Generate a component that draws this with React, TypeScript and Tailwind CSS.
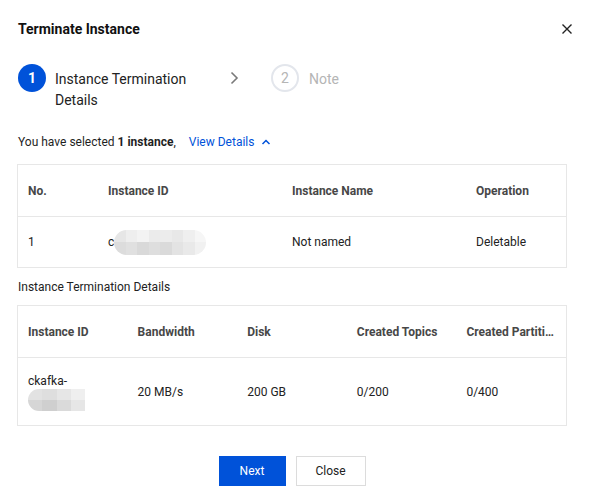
import React from 'react';

const font = { fontFamily: 'Roboto, "Liberation Sans", Arial, sans-serif' };

function BlurPill({ top, bottom, className }: { top: string[]; bottom: string[]; className: string }) {
  return (
    <div className={className}>
      <div className="flex h-1/2">
        {top.map((c, i) => (
          <div key={i} className="flex-1" style={{ background: c }} />
        ))}
      </div>
      <div className="flex h-1/2">
        {bottom.map((c, i) => (
          <div key={i} className="flex-1" style={{ background: c }} />
        ))}
      </div>
    </div>
  );
}

function ChevronRight() {
  return (
    <svg width="10" height="14" viewBox="0 0 10 14" fill="none">
      <path d="M2.5 1.5L8 7l-5.5 5.5" stroke="#7a7a7a" strokeWidth="1.6" />
    </svg>
  );
}

function ChevronUp() {
  return (
    <svg width="10" height="8" viewBox="0 0 10 8" fill="none">
      <path d="M1.5 6L5 2.5 8.5 6" stroke="#0052d9" strokeWidth="1.5" />
    </svg>
  );
}

export default function App() {
  return (
    <div className="w-[591px] h-[504px] bg-white text-[#1f1f1f] pl-[17px] pr-[24px] pt-[18px] flex flex-col" style={font}>
      <div className="flex items-center justify-between h-[22px]">
        <h2 className="text-[14px] font-bold leading-[22px] pl-px text-[#111]">Terminate Instance</h2>
        <svg width="12" height="12" viewBox="0 0 12 12" className="-mr-[6px]">
          <path d="M1.5 1.5l9 9M10.5 1.5l-9 9" stroke="#222" strokeWidth="1.4" />
        </svg>
      </div>

      <div className="flex items-start mt-[24px] pl-px">
        <div className="w-[28px] h-[28px] rounded-full bg-[#0052d9] text-white flex items-center justify-center text-[14px] font-bold shrink-0">
          1
        </div>
        <div className="ml-[9px] mt-[5px] w-[140px] text-[14px] leading-[21px] text-[#222]">
          Instance Termination Details
        </div>
        <div className="ml-[34px] mt-[7px]">
          <ChevronRight />
        </div>
        <div className="ml-[32px] w-[28px] h-[28px] rounded-full border-2 border-[#e3e6ec] text-[#b5b5b5] flex items-center justify-center text-[14px] shrink-0">
          2
        </div>
        <div className="ml-[10px] mt-[5px] text-[14px] leading-[21px] text-[#b5b5b5]">Note</div>
      </div>

      <div className="flex items-center mt-[21px] h-[20px] text-[12px] pl-px">
        <span>
          You have selected <b className="font-bold">1 instance</b>,
        </span>
        <span className="ml-[13px] text-[#0052d9]">View Details</span>
        <span className="ml-[7px] flex items-center">
          <ChevronUp />
        </span>
      </div>

      <div className="mt-[12px] border border-[#e7e7e7] text-[12px]">
        <div className="grid grid-cols-[80px_184px_184px_1fr] h-[52px] items-center font-bold text-[#474747] border-b border-[#e7e7e7]">
          <div className="pl-[10px]">No.</div>
          <div className="pl-[10px]">Instance ID</div>
          <div className="pl-[10px]">Instance Name</div>
          <div className="pl-[10px]">Operation</div>
        </div>
        <div className="grid grid-cols-[80px_184px_184px_1fr] h-[50px] items-center text-[#222]">
          <div className="pl-[10px]">1</div>
          <div className="pl-[10px] flex items-center">
            <span>c</span>
            <BlurPill
              className="w-[92px] h-[25px] rounded-full overflow-hidden flex flex-col"
              top={['#e6e6e6', '#eeeeee', '#f3f3f3', '#ebebeb', '#ececec', '#e8e8e8', '#efefef', '#f6f6f6']}
              bottom={['#dcdcdc', '#e0e0e0', '#d9d9d9', '#dedede', '#dadada', '#e3e3e3', '#e9e9e9', '#f1f1f1']}
            />
          </div>
          <div className="pl-[10px]">Not named</div>
          <div className="pl-[10px]">Deletable</div>
        </div>
      </div>

      <div className="mt-[9px] h-[20px] leading-[20px] text-[12px] pl-px text-[#222]">Instance Termination Details</div>

      <div className="mt-[8px] border border-[#e7e7e7] text-[12px]">
        <div className="grid grid-cols-5 h-[52px] items-center font-bold text-[#474747] border-b border-[#e7e7e7]">
          <div className="pl-[10px]">Instance ID</div>
          <div className="pl-[10px]">Bandwidth</div>
          <div className="pl-[10px]">Disk</div>
          <div className="pl-[10px]">Created Topics</div>
          <div className="pl-[10px] pr-[8px] truncate">Created Partitions</div>
        </div>
        <div className="grid grid-cols-5 h-[67px] items-center text-[#222]">
          <div className="pl-[10px] flex flex-col">
            <span className="leading-[16px]">ckafka-</span>
            <BlurPill
              className="w-[57px] h-[22px] rounded-l-full overflow-hidden flex flex-col"
              top={['#e2e2e2', '#dedede', '#e6e6e6', '#efefef']}
              bottom={['#d6d6d6', '#cfcfcf', '#dadada', '#e6e6e6']}
            />
          </div>
          <div className="pl-[10px]">20 MB/s</div>
          <div className="pl-[10px]">200 GB</div>
          <div className="pl-[10px]">0/200</div>
          <div className="pl-[10px]">0/400</div>
        </div>
      </div>

      <div className="mt-[30px] flex justify-center gap-[10px] text-[12px]">
        <button className="w-[67px] h-[30px] bg-[#0052d9] text-white">Next</button>
        <button className="w-[70px] h-[30px] border border-[#dcdcdc] bg-white text-[#222]">Close</button>
      </div>
    </div>
  );
}
